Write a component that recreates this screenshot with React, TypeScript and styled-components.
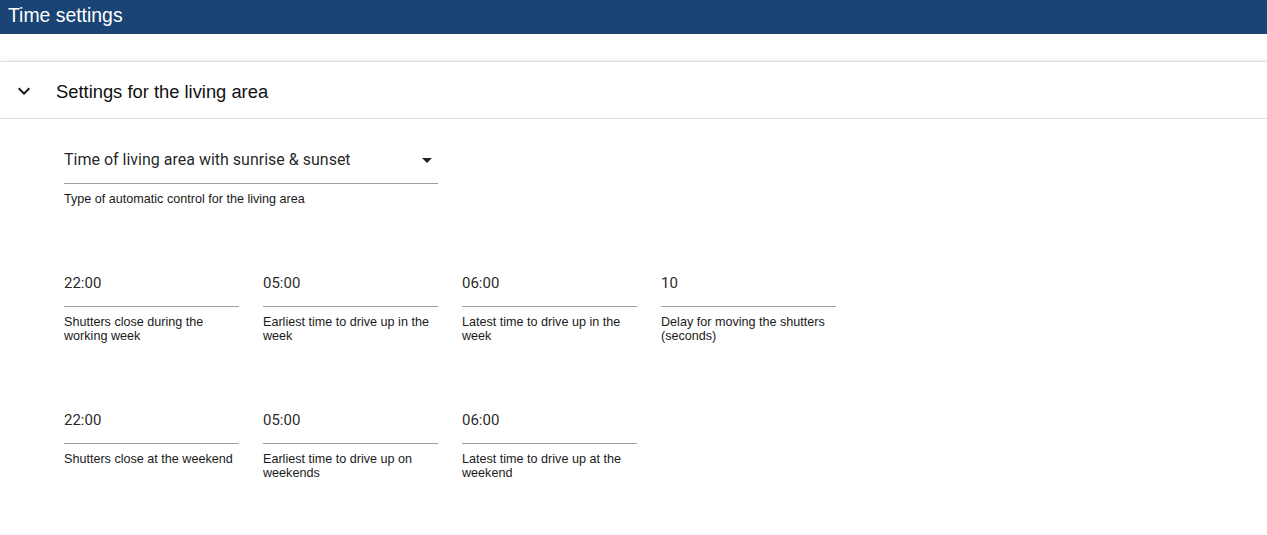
import React from "react";
import styled, { createGlobalStyle } from "styled-components";

const Global = createGlobalStyle`
  html, body { margin: 0; padding: 0; background: #fff; }
  body { font-family: "Liberation Sans", Arial, sans-serif; color: #212121; }
  * { box-sizing: border-box; }
`;

const Page = styled.div`
  width: 1267px;
  min-height: 535px;
  background: #fff;
`;

const TopBar = styled.header`
  height: 34px;
  background: #194474;
  color: #fff;
  padding: 0 8px;
  font-size: 19.4px;
  line-height: 30px;
`;

const Card = styled.section`
  margin-top: 27px;
  border-top: 1px solid #e0e0e0;
  box-shadow: 0 -2px 4px rgba(0, 0, 0, 0.05);
`;

const AccordionHeader = styled.div`
  height: 57px;
  display: flex;
  align-items: center;
  gap: 20px;
  padding-left: 12px;
  border-bottom: 1px solid #e0e0e0;
`;

const Title = styled.h2`
  margin: 0;
  padding-top: 3px;
  font-weight: normal;
  font-size: 18.35px;
  color: #111;
`;

const Content = styled.div`
  padding: 18px 0 40px 64px;
  display: flex;
  flex-direction: column;
  gap: 54px;
`;

const Field = styled.div<{ $width: number }>`
  width: ${(p) => p.$width}px;
`;

const InputBox = styled.div<{ $size?: number }>`
  height: 47px;
  display: flex;
  align-items: center;
  justify-content: space-between;
  border-bottom: 1px solid #9e9e9e;
  padding-bottom: 1px;
  font-family: Roboto, "Liberation Sans", sans-serif;
  font-size: ${(p) => p.$size ?? 15}px;
  color: rgba(0, 0, 0, 0.87);
`;

const Helper = styled.div`
  margin-top: 8px;
  font-size: 12.6px;
  line-height: 14px;
  color: #1a1a1a;
`;

const Grid = styled.div`
  display: grid;
  grid-template-columns: repeat(4, 175px);
  column-gap: 24px;
`;

const Chevron = () => (
  <svg width="24" height="24" viewBox="0 0 24 24" style={{ marginTop: 2 }}>
    <path d="M7.41 8.59L12 13.17l4.59-4.58L18 10l-6 6-6-6 1.41-1.41z" fill="#1a1a1a" />
  </svg>
);

const ArrowDrop = () => (
  <svg width="24" height="24" viewBox="0 0 24 24" style={{ marginRight: -1 }}>
    <path d="M7 10l5 5 5-5z" fill="#222" />
  </svg>
);

type F = { value: string; label: string };

const week: F[] = [
  { value: "22:00", label: "Shutters close during the working week" },
  { value: "05:00", label: "Earliest time to drive up in the week" },
  { value: "06:00", label: "Latest time to drive up in the week" },
  { value: "10", label: "Delay for moving the shutters (seconds)" },
];

const weekend: F[] = [
  { value: "22:00", label: "Shutters close at the weekend" },
  { value: "05:00", label: "Earliest time to drive up on weekends" },
  { value: "06:00", label: "Latest time to drive up at the weekend" },
];

const TextField = ({ value, label }: F) => (
  <Field $width={175}>
    <InputBox>{value}</InputBox>
    <Helper>{label}</Helper>
  </Field>
);

export default function App() {
  return (
    <Page>
      <Global />
      <TopBar>Time settings</TopBar>
      <Card>
        <AccordionHeader>
          <Chevron />
          <Title>Settings for the living area</Title>
        </AccordionHeader>
        <Content>
          <Field $width={374}>
            <InputBox $size={16}>
              <span>Time of living area with sunrise &amp; sunset</span>
              <ArrowDrop />
            </InputBox>
            <Helper>Type of automatic control for the living area</Helper>
          </Field>
          <Grid>
            {week.map((f, i) => (
              <TextField key={"w" + i} {...f} />
            ))}
          </Grid>
          <Grid>
            {weekend.map((f, i) => (
              <TextField key={"e" + i} {...f} />
            ))}
          </Grid>
        </Content>
      </Card>
    </Page>
  );
}
